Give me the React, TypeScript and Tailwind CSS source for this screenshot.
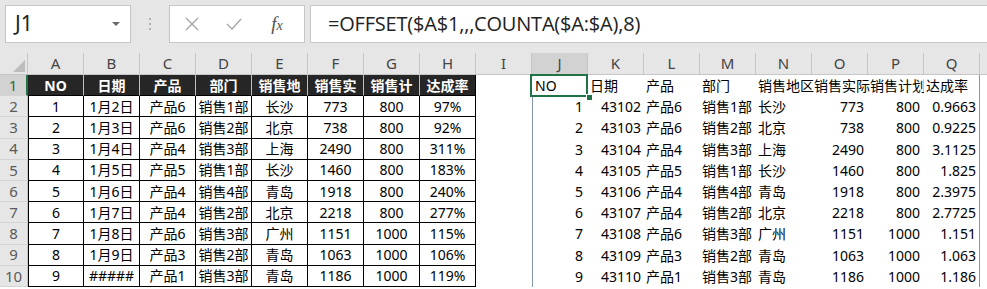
import React from "react";

const FONT = { fontFamily: '"Noto Sans", "Noto Sans CJK SC", sans-serif' };

const letters = ["A","B","C","D","E","F","G","H","I","J","K","L","M","N","O","P","Q"];

const leftHead = ["NO","日期","产品","部门","销售地","销售实","销售计","达成率"];
const leftRows = [
  ["1","1月2日","产品6","销售1部","长沙","773","800","97%"],
  ["2","1月3日","产品6","销售2部","北京","738","800","92%"],
  ["3","1月4日","产品4","销售3部","上海","2490","800","311%"],
  ["4","1月5日","产品5","销售1部","长沙","1460","800","183%"],
  ["5","1月6日","产品4","销售4部","青岛","1918","800","240%"],
  ["6","1月7日","产品4","销售2部","北京","2218","800","277%"],
  ["7","1月8日","产品6","销售3部","广州","1151","1000","115%"],
  ["8","1月9日","产品3","销售2部","青岛","1063","1000","106%"],
  ["9","#####","产品1","销售3部","青岛","1186","1000","119%"],
];
const rightQ = ["0.9663","0.9225","3.1125","1.825","2.3975","2.7725","1.151","1.063","1.186"];
const rightHead = ["日期","产品","部门","销售地区","销售实际","销售计划","达成率"];

function RowHead({ n, selected }: { n: number; selected?: boolean }) {
  return (
    <div
      className={
        "w-[28px] shrink-0 flex items-center justify-center text-[15px] border-b border-[#d4d4d4] " +
        (selected ? "bg-[#d2d2d2] text-[#217346] border-r-2 border-r-[#217346]" : "bg-[#e6e6e6] text-[#5a5a5a] border-r border-r-[#c6c6c6]")
      }
    >
      {n}
    </div>
  );
}

export default function App() {
  return (
    <div className="w-[987px] h-[289px] overflow-hidden bg-white text-black" style={FONT}>
      {/* Formula bar */}
      <div className="h-[53px] bg-[#e6e6e6] flex items-start pt-[5px]">
        <div className="ml-[5px] w-[126px] h-[38px] bg-white border border-[#c6c6c6] flex items-center justify-between pl-[9px] pr-[10px]">
          <span className="text-[21px] text-[#222]" style={{ fontFamily: '"Noto Sans", sans-serif' }}>J1</span>
          <svg width="8" height="5" viewBox="0 0 8 5"><path d="M0 0 L8 0 L4 4 Z" fill="#6b6b6b" /></svg>
        </div>
        <div className="w-[38px] h-[38px] flex items-center justify-center">
          <svg width="4" height="12" viewBox="0 0 4 12">
            <rect x="1" y="0" width="2" height="2" fill="#b0b0b0" />
            <rect x="1" y="5" width="2" height="2" fill="#b0b0b0" />
            <rect x="1" y="10" width="2" height="2" fill="#b0b0b0" />
          </svg>
        </div>
        <div className="w-[136px] h-[38px] bg-white border border-[#c6c6c6] flex items-center">
          <div className="w-[44px] flex justify-center">
            <svg width="14" height="14" viewBox="0 0 14 14"><path d="M1 1 L13 13 M13 1 L1 13" stroke="#a6a6a6" strokeWidth="1.4" fill="none" /></svg>
          </div>
          <div className="w-[40px] flex justify-center">
            <svg width="16" height="12" viewBox="0 0 16 12"><path d="M1 6 L6 11 L15 1" stroke="#a6a6a6" strokeWidth="1.4" fill="none" /></svg>
          </div>
          <div className="w-[46px] flex justify-center">
            <span className="italic text-[19px] text-[#505050]" style={{ fontFamily: '"Liberation Serif", serif' }}>f<span className="text-[14px]">x</span></span>
          </div>
        </div>
        <div className="ml-[5px] flex-1 h-[38px] bg-white border border-r-0 border-[#c6c6c6] flex items-center pl-[17px]">
          <span className="text-[20px] text-[#222] whitespace-nowrap tracking-[-0.2px]" style={{ fontFamily: '"Open Sans", "Noto Sans", sans-serif' }}>
            =OFFSET($A$1,,,COUNTA($A:$A),8)
          </span>
        </div>
      </div>

      {/* Column header row */}
      <div className="flex h-[22px] bg-[#e6e6e6] border-b border-[#c6c6c6]">
        <div className="w-[28px] shrink-0 relative border-r border-[#c6c6c6]">
          <svg className="absolute right-[2px] bottom-[2px]" width="12" height="12" viewBox="0 0 12 12"><path d="M12 0 L12 12 L0 12 Z" fill="#bdbdbd" /></svg>
        </div>
        {letters.map((l) => (
          <div
            key={l}
            className={
              "w-[56px] shrink-0 flex items-center justify-center text-[15px] border-r border-[#c6c6c6] " +
              (l === "J" ? "bg-[#d2d2d2] text-[#444]" : "text-[#444]")
            }
          >
            {l}
          </div>
        ))}
        <div className="flex-1" />
      </div>

      {/* Row 1 */}
      <div className="flex h-[21.2px]">
        <RowHead n={1} selected />
        {leftHead.map((h, i) => (
          <div
            key={i}
            className={
              "w-[56px] shrink-0 bg-[#262626] text-white font-bold text-[14px] flex items-center justify-center whitespace-nowrap overflow-hidden border-b border-black " +
              (i === 7 ? "border-r border-r-black" : "border-r border-r-[#bfbfbf]")
            }
          >
            {h}
          </div>
        ))}
        <div className="w-[56px] shrink-0" />
        <div className="w-[56px] shrink-0 relative flex items-center pl-[3px] text-[14px]">
          NO
          <div className="absolute left-[-2px] top-[-1px] w-[58px] h-[23px] border-2 border-[#217346]" />
          <div className="absolute right-[-5px] bottom-[-5px] w-[7px] h-[7px] bg-[#217346] border border-white" />
        </div>
        {rightHead.map((h, i) => (
          <div
            key={i}
            className={
              "w-[56px] shrink-0 flex items-center text-[14px] whitespace-nowrap pl-[2px] " +
              (i === 5 ? "overflow-hidden" : "overflow-visible") +
              (i === 6 ? " border-r border-[#8497b0]" : "")
            }
          >
            {h}
          </div>
        ))}
      </div>

      {/* Data rows */}
      {leftRows.map((r, ri) => (
        <div key={ri} className="flex h-[21.2px]">
          <RowHead n={ri + 2} />
          {r.map((c, ci) => (
            <div
              key={ci}
              className={
                "w-[56px] shrink-0 flex items-center justify-center text-[14px] whitespace-nowrap overflow-hidden border-r border-b border-black " +
                (ci === 0 ? "border-l" : "")
              }
            >
              {c}
            </div>
          ))}
          <div className="w-[56px] shrink-0" />
          <div className="w-[56px] shrink-0 flex items-center justify-end pr-[5px] text-[14px] border-l border-[#8497b0]">{r[0]}</div>
          <div className="w-[56px] shrink-0 flex items-center justify-end pr-[3px] text-[14px]">{43102 + ri}</div>
          <div className="w-[56px] shrink-0 flex items-center pl-[2px] text-[14px] whitespace-nowrap">{r[2]}</div>
          <div className="w-[56px] shrink-0 flex items-center pl-[2px] text-[14px] whitespace-nowrap">{r[3]}</div>
          <div className="w-[56px] shrink-0 flex items-center pl-[2px] text-[14px] whitespace-nowrap">{r[4]}</div>
          <div className="w-[56px] shrink-0 flex items-center justify-end pr-[4px] text-[14px]">{r[5]}</div>
          <div className="w-[56px] shrink-0 flex items-center justify-end pr-[4px] text-[14px]">{r[6]}</div>
          <div className="w-[56px] shrink-0 flex items-center justify-end pr-[3px] text-[14px] border-r border-[#8497b0]">{rightQ[ri]}</div>
        </div>
      ))}
    </div>
  );
}
